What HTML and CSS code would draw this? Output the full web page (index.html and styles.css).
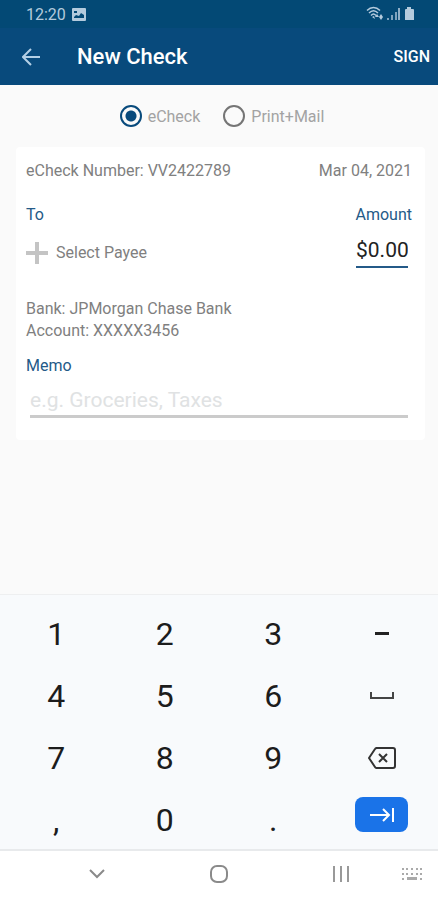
FILE: index.html
```html
<!DOCTYPE html>
<html lang="en">
<head>
  <meta charset="UTF-8" />
  <meta name="viewport" content="width=device-width, initial-scale=1.0"/>
  <title>New Check</title>
  <link rel="stylesheet" href="styles.css">
</head>
<body>
  <div class="status-bar">
    <span>12:20</span>
    <svg class="status-photo" width="14" height="13" viewBox="0 0 14 13">
      <path fill="currentColor" fill-rule="evenodd" d="M1 0h12a1 1 0 0 1 1 1v11a1 1 0 0 1-1 1H1a1 1 0 0 1-1-1V1a1 1 0 0 1 1-1zM2 10h10V7L9 5 7 8 4 7 2 9zM2 3v2h3V3z"/>
    </svg>
    <svg class="status-signal" width="48" height="16" viewBox="0 0 48 16">
      <g fill="none" stroke="currentColor" stroke-width="1.5">
        <path d="M1 4.500c4-4 9-4 13 0M3 7c3-3 6-3 9 0M5 9.500c2-2 3-2 5 0"/>
      </g>
      <path fill="currentColor" d="M6 11l2-1 1 3zM11 8l2 3h-4zM15 8l2 3-2 3-2-3z"/>
      <g fill="currentColor">
        <path d="M21 12h2v2h-2zM25 9h2v5h-2zM29 6h2v8h-2z" opacity=".7"/>
        <path d="M32 2h2v12h-2z" opacity=".8"/>
        <path d="M41 1h4v2h2a1 1 0 0 1 1 1v10h-9V4a1 1 0 0 1 1-1h1z"/>
      </g>
    </svg>
  </div>

  <header class="app-bar">
    <button class="back-btn" aria-label="Back">
      <svg width="18" height="18" viewBox="0 0 18 18" fill="none" stroke="currentColor" stroke-width="2">
        <path d="M18 9H2M9 1L1 9l8 8"/>
      </svg>
    </button>
    <h1>New Check</h1>
    <button class="sign-btn">SIGN</button>
  </header>

  <main>
    <div class="delivery">
      <label><input type="radio" name="delivery" value="echeck" checked> eCheck</label>
      <label><input type="radio" name="delivery" value="print"> Print+Mail</label>
    </div>

    <section class="check-card">
      <div class="row">
        <span>eCheck Number: VV2422789</span>
        <span>Mar 04, 2021</span>
      </div>
      <div class="row labels">
        <span class="field-label">To</span>
        <label class="field-label" for="amount">Amount</label>
      </div>
      <div class="row payee-row">
        <button class="payee-btn">
          <svg width="22" height="22" viewBox="0 0 22 22" fill="none" stroke="#c4c4c4" stroke-width="4">
            <path d="M11 0v22M0 11h22"/>
          </svg>
          Select Payee
        </button>
        <input type="text" id="amount" class="amount" value="$0.00">
      </div>
      <div class="bank">
        <div>Bank: JPMorgan Chase Bank</div>
        <div>Account: XXXXX3456</div>
      </div>
      <label class="field-label" for="memo">Memo</label>
      <input type="text" id="memo" class="memo" placeholder="e.g. Groceries, Taxes">
    </section>
  </main>

  <div class="keypad">
    <button>1</button>
    <button>2</button>
    <button>3</button>
    <button aria-label="Minus">
      <svg width="14" height="3" viewBox="0 0 14 3"><path fill="#222" d="M0 0h14v3H0z"/></svg>
    </button>
    <button>4</button>
    <button>5</button>
    <button>6</button>
    <button aria-label="Space">
      <svg width="24" height="7" viewBox="0 0 24 7" fill="none" stroke="#444" stroke-width="2">
        <path d="M1 0v6h22V0"/>
      </svg>
    </button>
    <button>7</button>
    <button>8</button>
    <button>9</button>
    <button aria-label="Delete">
      <svg width="28" height="22" viewBox="0 0 28 22" fill="none" stroke="#333" stroke-width="2">
        <path d="M9 1h16a2 2 0 0 1 2 2v16a2 2 0 0 1-2 2H9a2 2 0 0 1-2-1L1 11l6-9a2 2 0 0 1 2-1z" stroke-linejoin="round"/>
        <path d="M11 7l8 8M19 7l-8 8"/>
      </svg>
    </button>
    <button>,</button>
    <button>0</button>
    <button>.</button>
    <button class="next-btn" aria-label="Next">
      <span>
        <svg width="24" height="14" viewBox="0 0 24 14" fill="none" stroke="#fff" stroke-width="2">
          <path d="M0 7h18M13 1l6 6-6 6M23 0v14"/>
        </svg>
      </span>
    </button>
  </div>

  <nav class="nav-bar">
    <button aria-label="Hide keyboard">
      <svg width="16" height="10" viewBox="0 0 16 10" fill="none" stroke="#8a8a8a" stroke-width="2">
        <path d="M1 1l7 7 7-7"/>
      </svg>
    </button>
    <button aria-label="Home">
      <svg width="18" height="18" viewBox="0 0 18 18" fill="none" stroke="#8a8a8a" stroke-width="2">
        <rect x="1" y="1" width="16" height="16" rx="6"/>
      </svg>
    </button>
    <button aria-label="Recent apps">
      <svg width="16" height="16" viewBox="0 0 16 16" fill="none" stroke="#999" stroke-width="2">
        <path d="M1 0v16M8 0v16M15 0v16"/>
      </svg>
    </button>
    <button class="switch-btn" aria-label="Switch keyboard">
      <svg width="20" height="12" viewBox="0 0 20 12" fill="#aaa">
        <path d="M0 0h2v2H0zM4 0h2v2H4zM9 0h2v2H9zM14 0h2v2h-2zM18 0h2v2h-2zM0 5h2v2H0zM4 5h2v2H4zM9 5h2v2H9zM14 5h2v2h-2zM18 5h2v2h-2zM0 10h2v2H0zM5 9h10v3H5zM18 10h2v2h-2z"/>
      </svg>
    </button>
  </nav>
</body>
</html>
```

FILE: styles.css
```css
* {
  box-sizing: border-box;
}
body {
  font-family: Roboto, Arial, sans-serif;
  font-size: 16px;
  margin: 0;
  min-height: 100vh;
  display: flex;
  flex-direction: column;
  background: #fafafa;
  color: #808080;
}
button, input {
  font: inherit;
  color: inherit;
  margin: 0;
  padding: 0;
  border: none;
  background: none;
}
button {
  display: flex;
  align-items: center;
  justify-content: center;
  cursor: pointer;
}
.status-bar {
  display: flex;
  align-items: center;
  height: 28px;
  padding: 0 24px 0 26px;
  background: #034975;
  color: #b4cbdd;
}
.status-photo {
  margin-left: 6px;
}
.status-signal {
  margin-left: auto;
}
.app-bar {
  display: flex;
  align-items: center;
  height: 57px;
  padding: 0 8px 0 22px;
  background: #084a7c;
  color: white;
}
.back-btn {
  color: #b4d0e6;
}
.app-bar h1 {
  margin: 0 auto 0 37px;
  font-size: 22px;
  font-weight: 500;
}
.sign-btn {
  font-weight: 500;
}
main {
  flex: 1;
}
.delivery {
  display: flex;
  justify-content: center;
  gap: 23px;
  padding: 20px 0 20px 6px;
  color: #a3a3a3;
}
.delivery label {
  display: flex;
  align-items: center;
  gap: 6px;
}
.delivery input {
  appearance: none;
  width: 22px;
  height: 22px;
  border: 2px solid #757575;
  border-radius: 50%;
}
.delivery input:checked {
  border-color: #084a7c;
  background: radial-gradient(circle, #084a7c 5px, transparent 6px);
}
.check-card {
  margin: 0 13px 0 16px;
  padding: 13px 13px 22px 10px;
  background: white;
  border-radius: 4px;
  line-height: 22px;
}
.row {
  display: flex;
  justify-content: space-between;
}
.labels {
  margin-top: 22px;
}
.field-label {
  color: #245a88;
}
.payee-row {
  align-items: flex-end;
  margin-top: 8px;
  padding-right: 4px;
}
.payee-btn {
  gap: 8px;
  margin-bottom: 4px;
}
.amount {
  width: 52px;
  height: 34px;
  border-bottom: 2px solid #245a88;
  color: #222;
  font-size: 21px;
}
.bank {
  margin: 30px 0 13px;
}
.memo {
  display: block;
  width: calc(100% - 8px);
  height: 41px;
  margin-left: 4px;
  padding-top: 8px;
  border-bottom: 3px solid #cbcbcb;
  color: #222;
  font-size: 21px;
}
.memo::placeholder {
  color: #e0e2e3;
  opacity: 1;
}
.keypad {
  display: grid;
  grid-template-columns: repeat(4, 1fr);
  grid-auto-rows: 62px;
  padding: 6px 2px 0;
  border-top: 1px solid #eeeff0;
  background: #f8fafc;
}
.keypad button {
  padding-top: 3px;
  color: #1c1c1c;
  font-size: 32px;
}
.next-btn span {
  display: flex;
  align-items: center;
  justify-content: center;
  width: 53px;
  height: 35px;
  margin-bottom: 10px;
  border-radius: 8px;
  background: #1a73e8;
}
.nav-bar {
  display: grid;
  grid-template-columns: 36px repeat(3, 1fr) 36px;
  height: 51px;
  padding-bottom: 4px;
  border-top: 2px solid #e8eaec;
  background: white;
}
.nav-bar button:first-child {
  grid-column: 2;
}
.nav-bar .switch-btn {
  justify-content: flex-start;
}
```
